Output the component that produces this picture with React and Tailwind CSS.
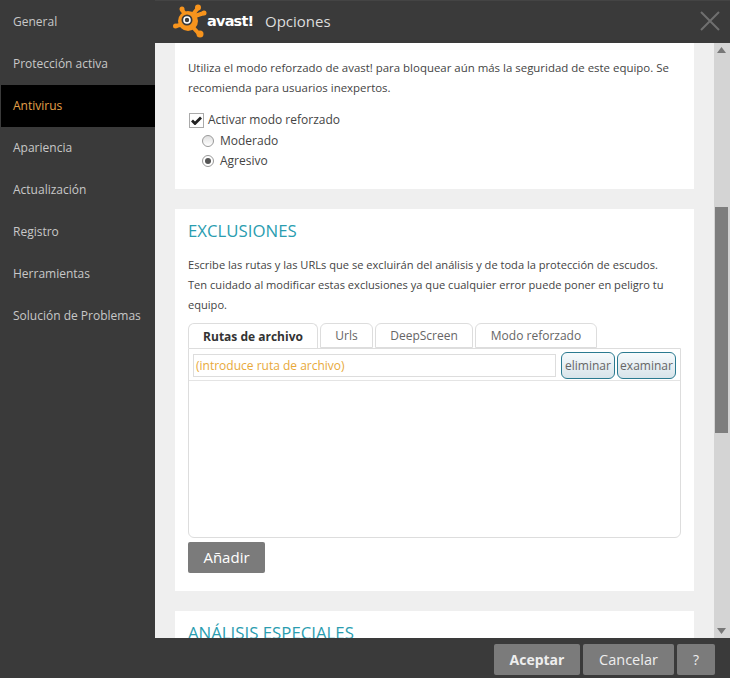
const menu = ['General', 'Protección activa', 'Antivirus', 'Apariencia', 'Actualización', 'Registro', 'Herramientas', 'Solución de Problemas'];

const tabs = [
  { label: 'Rutas de archivo', w: 'w-[130px]' },
  { label: 'Urls', w: 'w-[53px]' },
  { label: 'DeepScreen', w: 'w-[98px]' },
  { label: 'Modo reforzado', w: 'w-[122px]' },
];

const Logo = () => (
  <div className="flex items-center ml-px">
    <svg width="34" height="34" viewBox="0 0 34 34">
      <g fill="#f7941d" stroke="#f7941d" strokeLinecap="round">
        <circle cx="15" cy="17" r="10" stroke="none" />
        <path d="M15 14L9 6M17 14L25 4M19 13L31 9M11 20L3 22M17 20L27 31" strokeWidth="4" />
        <circle cx="9" cy="5" r="2.5" stroke="none" />
        <circle cx="25" cy="3.5" r="3" stroke="none" />
        <circle cx="31" cy="9" r="2.5" stroke="none" />
        <circle cx="2.5" cy="22" r="2.5" stroke="none" />
        <circle cx="27" cy="30" r="3.5" stroke="none" />
      </g>
      <circle cx="14" cy="16" r="5.5" fill="#3a3a3a" />
      <circle cx="14" cy="16" r="3" fill="none" stroke="#fff" strokeWidth="1.6" />
    </svg>
    <span className="w-[46px] text-[14.5px] leading-none font-bold text-white font-['DejaVu_Sans'] tracking-[-0.8px] whitespace-nowrap">avast!</span>
  </div>
);

const SmallButton = ({ children, className }) => (
  <button className={`h-[27px] rounded-[6px] border border-[#2a7a90] bg-gradient-to-b from-[#f6fafc] to-[#d8e4ea] text-[12px] text-[#666] ${className}`}>
    {children}
  </button>
);

const FooterButton = ({ children, className }) => (
  <button className={`h-[31px] rounded-[2px] bg-[#7b7b7b] text-[#eee] ${className}`}>
    {children}
  </button>
);

export default function App() {
  return (
    <div className="w-[730px] h-[678px] flex overflow-hidden bg-[#3a3a3a] font-['Open_Sans',sans-serif] text-[#444]">
      <nav className="w-[155px] shrink-0 pl-px pt-px">
        {menu.map((item) => (
          <div
            key={item}
            className={`h-[42px] flex items-center pl-3 text-[12px] whitespace-nowrap ${item === 'Antivirus' ? 'bg-black text-[#e5a04a]' : 'text-[#c8c8c8]'}`}
          >
            {item}
          </div>
        ))}
      </nav>

      <div className="flex-1 min-w-0 flex flex-col">
        <header className="h-[43px] shrink-0 flex items-center pl-[17px] pr-[10px] pb-[2px] border-t border-[#444]">
          <Logo />
          <span className="ml-[12px] text-[15px] text-[#ddd]">Opciones</span>
          <svg className="ml-auto" width="20" height="20" viewBox="0 0 20 20">
            <path d="M1 1l18 18M19 1L1 19" stroke="#6f6f6f" strokeWidth="2" />
          </svg>
        </header>

        <div className="flex-1 min-h-0 flex">
          <main className="flex-1 min-w-0 overflow-hidden bg-[#efefef] px-5">
            <section className="h-[146px] bg-white pl-[13px] pr-4 pt-[15px]">
              <p className="text-[11.45px] leading-5 text-[#444]">
                Utiliza el modo reforzado de avast! para bloquear aún más la seguridad de este equipo. Se recomienda para usuarios inexpertos.
              </p>
              <label className="mt-[12px] flex items-center h-5 text-[12px]">
                <span className="w-[15px] h-[15px] ml-px flex items-center justify-center border border-[#aaa] bg-white">
                  <svg width="11" height="9" viewBox="0 0 11 9">
                    <path d="M1 4.5l3 3L10 1.5" fill="none" stroke="#222" strokeWidth="2.8" />
                  </svg>
                </span>
                <span className="ml-1">Activar modo reforzado</span>
              </label>
              <div className="ml-[14px] flex items-center h-[21px] text-[12px]">
                <span className="w-3 h-3 rounded-full border border-[#999] bg-gradient-to-b from-[#e0e0e0] to-white" />
                <span className="ml-[6px]">Moderado</span>
              </div>
              <div className="ml-[14px] flex items-center h-[20px] text-[12px]">
                <span className="w-3 h-3 rounded-full border border-[#999] bg-white flex items-center justify-center">
                  <span className="w-[6px] h-[6px] rounded-full bg-[#555]" />
                </span>
                <span className="ml-[6px]">Agresivo</span>
              </div>
            </section>

            <section className="mt-5 h-[382px] bg-white pl-[13px] pr-[13px] pt-[10px]">
              <h2 className="text-[16.8px] leading-6 text-[#2a9db0]">EXCLUSIONES</h2>
              <p className="mt-[12px] max-w-[482px] text-[11.1px] leading-5 text-[#444]">
                Escribe las rutas y las URLs que se excluirán del análisis y de toda la protección de escudos. Ten cuidado al modificar estas exclusiones ya que cualquier error puede poner en peligro tu equipo.
              </p>
              <div className="mt-[8px] flex items-end gap-[2px] h-[25px]">
                {tabs.map((tab, i) => (
                  <div
                    key={tab.label}
                    className={`${tab.w} h-[25px] pt-px flex items-center justify-center rounded-t-[6px] border border-[#ddd] text-[12px] ${i === 0 ? 'border-b-0 bg-white font-bold text-[#333]' : 'text-[#666]'}`}
                  >
                    {tab.label}
                  </div>
                ))}
              </div>
              <div className="h-[190px] border border-[#ddd] rounded-b-[6px]">
                <div className="h-[32px] pt-[2px] flex items-center pl-1 border-b border-[#e4e4e4]">
                  <div className="w-[363px] h-[23px] flex items-center border border-[#ddd] pl-[2px] text-[12px] text-[#e8a93a]">
                    (introduce ruta de archivo)
                  </div>
                  <SmallButton className="ml-[5px] w-[54px]">eliminar</SmallButton>
                  <SmallButton className="ml-[2px] w-[59px]">examinar</SmallButton>
                </div>
              </div>
              <button className="mt-[4px] w-[77px] h-[31px] rounded-[2px] bg-[#7b7b7b] text-[15px] text-white">Añadir</button>
            </section>

            <section className="mt-5 h-[60px] bg-white pl-[13px] pt-[10px]">
              <h2 className="text-[16.8px] leading-6 text-[#2a9db0] whitespace-nowrap">ANÁLISIS ESPECIALES</h2>
            </section>
          </main>

          <div className="w-4 shrink-0 bg-[#d4d4d4] flex flex-col items-start pl-px">
            <svg className="mt-[4px] ml-[2px]" width="9" height="6" viewBox="0 0 9 6"><path d="M4.5 0L9 6H0z" fill="#777" /></svg>
            <div className="mt-[154px] w-[13px] h-[226px] bg-[#7e7e7e]" />
            <svg className="mt-auto mb-[4px] ml-[2px]" width="9" height="6" viewBox="0 0 9 6"><path d="M0 0h9L4.5 6z" fill="#777" /></svg>
          </div>
        </div>

        <footer className="h-[40px] shrink-0 flex items-start justify-end gap-[3px] pt-[6px] pr-[15px]">
          <FooterButton className="w-[86px] font-bold text-[14px]">Aceptar</FooterButton>
          <FooterButton className="w-[91px] text-[14.5px]">Cancelar</FooterButton>
          <FooterButton className="w-[38px] text-[14px]">?</FooterButton>
        </footer>
      </div>
    </div>
  );
}
